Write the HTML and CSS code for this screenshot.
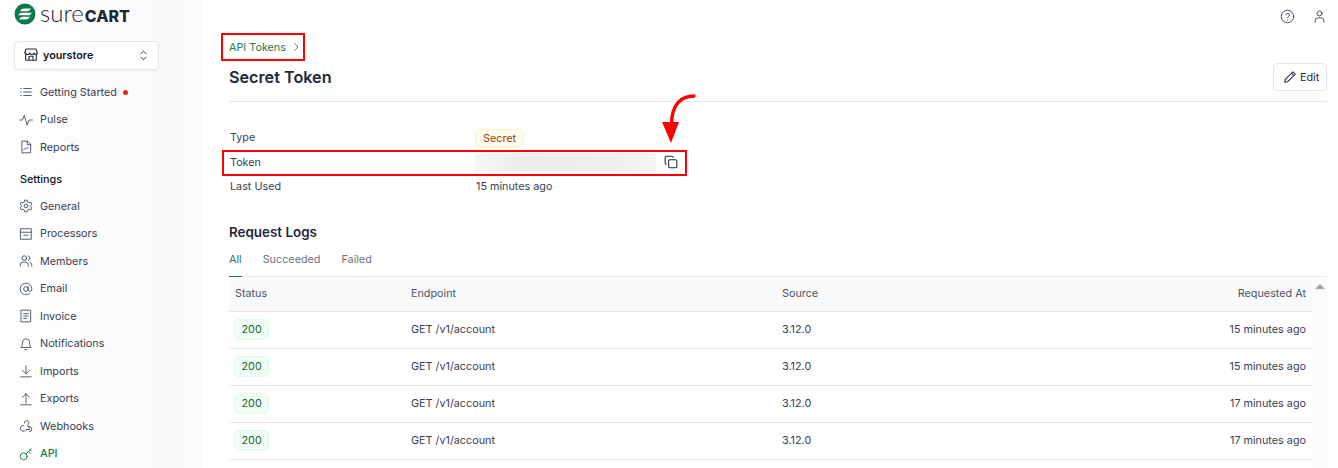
FILE: index.html
```html
<!DOCTYPE html>
<html lang="en">
<head>
    <meta charset="UTF-8">
    <meta name="viewport" content="width=device-width, initial-scale=1.0">
    <title>Secret Token</title>
    <link rel="stylesheet" href="styles.css">
</head>
<body>
  <div class="container">
    <aside class="sidebar">
      <div class="logo">
        <svg class="logo-mark" width="22" height="22" viewBox="0 0 22 22">
          <circle cx="11" cy="11" r="10.5" fill="#0b7a4b"/>
          <path d="M6 8.200c1-2 2.600-2.700 4.500-2.700h6.300c-.6 1.500-1.800 2.700-3.600 2.700z" fill="#fff"/>
          <path d="M4.200 12.300c.7-1.600 1.900-2.600 3.800-2.600h9.800c-.7 1.700-2 2.600-3.800 2.600z" fill="#fff"/>
          <path d="M5.200 16.500c.6-1.500 1.800-2.700 3.600-2.700h7.200c-1 2-2.600 2.700-4.500 2.700z" fill="#fff"/>
        </svg>
        <span class="logo-text"><span class="logo-light">sure</span><b>CART</b></span>
      </div>
      <div class="store">
        <svg class="icon" width="16" height="16" viewBox="0 0 24 24"><path d="M4 10v10h16V10M2.500 9l2-6h15l2 6c0 3-4 3-4.800 0-.8 3-5.600 3-6.700 0-1 3-5.900 3-6.700 0zM9 20v-6h6v6"/></svg>
        <span class="store-name">yourstore</span>
        <svg class="icon updown" width="13" height="13" viewBox="0 0 24 24"><path d="M7 9l5-5 5 5M7 15l5 5 5-5"/></svg>
      </div>
      <nav class="nav">
        <a class="nav-item"><svg class="icon" width="14" height="14" viewBox="0 0 24 24"><path d="M8 6h13M8 12h13M8 18h13M3 6h1M3 12h1M3 18h1"/></svg>Getting Started<span class="dot"></span></a>
        <a class="nav-item"><svg class="icon" width="14" height="14" viewBox="0 0 24 24"><path d="M1 12h5l3-8 5 17 3-9h6"/></svg>Pulse</a>
        <a class="nav-item"><svg class="icon" width="14" height="14" viewBox="0 0 24 24"><path d="M14 2H5v20h15V8zM14 2v6h6M8 17l3-3 2 1 3-3"/></svg>Reports</a>
        <div class="nav-title">Settings</div>
        <a class="nav-item"><svg class="icon" width="14" height="14" viewBox="0 0 24 24"><circle cx="12" cy="12" r="3"/><path d="M10 2h4l.6 3 2.600 1.500 2.900-1 2 3.500-2.300 2v2l2.300 2-2 3.500-2.900-1-2.600 1.500-.6 3h-4l-.6-3-2.600-1.500-2.900 1-2-3.500 2.300-2v-2l-2.300-2 2-3.500 2.900 1L9.400 5z"/></svg>General</a>
        <a class="nav-item"><svg class="icon" width="14" height="14" viewBox="0 0 24 24"><path d="M3 3h18v18H3zM3 9h18M8 14h8"/></svg>Processors</a>
        <a class="nav-item"><svg class="icon" width="14" height="14" viewBox="0 0 24 24"><circle cx="9" cy="7" r="4"/><path d="M2 21v-2a5 5 0 0 1 5-5h4a5 5 0 0 1 5 5v2M16 3.200a4 4 0 0 1 0 7.600M22 21v-2a5 5 0 0 0-3.500-4.800"/></svg>Members</a>
        <a class="nav-item"><svg class="icon" width="14" height="14" viewBox="0 0 24 24"><circle cx="12" cy="12" r="4"/><path d="M16 8v5a3 3 0 0 0 6 0v-1a10 10 0 1 0-4 8"/></svg>Email</a>
        <a class="nav-item"><svg class="icon" width="14" height="14" viewBox="0 0 24 24"><path d="M4 2h16v20H4zM8 8h8M8 12h8M8 16h5"/></svg>Invoice</a>
        <a class="nav-item"><svg class="icon" width="14" height="14" viewBox="0 0 24 24"><path d="M6 9a6 6 0 0 1 12 0c0 6 2 9 3 9H3c1 0 3-3 3-9zM10.500 21.500h3"/></svg>Notifications</a>
        <a class="nav-item"><svg class="icon" width="14" height="14" viewBox="0 0 24 24"><path d="M12 3v14M6 11l6 6 6-6M3 22h18"/></svg>Imports</a>
        <a class="nav-item"><svg class="icon" width="14" height="14" viewBox="0 0 24 24"><path d="M12 19V3M6 9l6-6 6 6M3 22h18"/></svg>Exports</a>
        <a class="nav-item"><svg class="icon" width="14" height="14" viewBox="0 0 24 24"><path d="M9 7a4 4 0 1 1 5.500 3.500L18 16M7.500 11a5 5 0 1 0 4.500 7h6M17 13a4.500 4.500 0 1 1 1 9"/></svg>Webhooks</a>
        <a class="nav-item active"><svg class="icon" width="14" height="14" viewBox="0 0 24 24"><circle cx="8" cy="16" r="6"/><path d="M12.500 11.500L21 3M16 8l3 3M19 5l2 2"/></svg>API</a>
      </nav>
    </aside>

    <main class="main">
      <div class="topbar">
        <svg class="icon" width="15" height="15" viewBox="0 0 24 24"><circle cx="12" cy="12" r="10"/><path d="M9.200 9a3 3 0 0 1 5.800 1c0 2-3 2.500-3 4M12 17.500h.01"/></svg>
        <svg class="icon" width="15" height="15" viewBox="0 0 24 24"><circle cx="12" cy="7" r="4"/><path d="M5 21v-2a5 5 0 0 1 5-5h4a5 5 0 0 1 5 5v2"/></svg>
      </div>
      <div class="crumb">API Tokens<svg class="icon" width="12" height="12" viewBox="0 0 24 24"><path d="M9 5l7 7-7 7"/></svg></div>
      <div class="page-head">
        <h1>Secret Token</h1>
        <button class="edit-btn"><svg class="icon dark" width="14" height="14" viewBox="0 0 24 24"><path d="M17 3l4 4L8 20l-5 1 1-5zM14.500 5.500l4 4"/></svg>Edit</button>
      </div>
      <dl class="details">
        <dt>Type</dt>
        <dd class="badge-cell"><span class="badge badge-warn">Secret</span></dd>
        <dt>Token</dt>
        <dd class="token-cell">
          <span class="token-blur"></span>
          <svg class="icon dark copy-icon" width="14" height="14" viewBox="0 0 24 24"><rect x="8" y="8" width="14" height="14" rx="2"/><path d="M4 16c-1 0-2-1-2-2V4c0-1 1-2 2-2h10c1 0 2 1 2 2"/></svg>
        </dd>
        <dt>Last Used</dt>
        <dd>15 minutes ago</dd>
      </dl>
      <h2>Request Logs</h2>
      <div class="tabs">
        <span class="tab active">All</span>
        <span class="tab">Succeeded</span>
        <span class="tab">Failed</span>
      </div>
      <div class="table-wrap">
        <table class="logs">
          <thead>
            <tr><th>Status</th><th>Endpoint</th><th>Source</th><th class="right">Requested At</th></tr>
          </thead>
          <tbody>
            <tr><td><span class="badge badge-ok">200</span></td><td>GET /v1/account</td><td>3.12.0</td><td class="right">15 minutes ago</td></tr>
            <tr><td><span class="badge badge-ok">200</span></td><td>GET /v1/account</td><td>3.12.0</td><td class="right">15 minutes ago</td></tr>
            <tr><td><span class="badge badge-ok">200</span></td><td>GET /v1/account</td><td>3.12.0</td><td class="right">17 minutes ago</td></tr>
            <tr><td><span class="badge badge-ok">200</span></td><td>GET /v1/account</td><td>3.12.0</td><td class="right">17 minutes ago</td></tr>
          </tbody>
        </table>
        <div class="scrollbar"><span class="scroll-up"></span></div>
      </div>
    </main>
  </div>

  <!-- annotations drawn over the screenshot -->
  <div class="mark mark-crumb"></div>
  <div class="mark mark-token"></div>
  <svg class="arrow" width="40" height="52" viewBox="0 0 40 52">
    <path d="M36 4C24 4 14 11 13.500 32" fill="none" stroke="#f00" stroke-width="3.500" stroke-linecap="round"/>
    <path d="M4 30h17l-8 21z" fill="#f00"/>
  </svg>
</body>
</html>
```
FILE: styles.css
```css
* {
    box-sizing: border-box;
}

html, body {
    margin: 0;
    height: 100%;
    overflow: hidden;
}

body {
    font-family: Inter, "Liberation Sans", sans-serif;
    font-size: 10.800px;
    color: #374151;
    background: #fff;
}

.container {
    display: flex;
    height: 468px;
}

.icon {
    flex: none;
    fill: none;
    stroke: #4b5563;
    stroke-width: 1.600;
    stroke-linecap: round;
    stroke-linejoin: round;
}

.icon.dark {
    stroke: #1f2937;
    stroke-width: 1.800;
}

/* sidebar */
.sidebar {
    width: 202px;
    flex: none;
    padding: 3px 0 0 14px;
    background: linear-gradient(to right, #fff, #f8f9fb 186px, #fafbfc 186px, #fafbfc);
}

.logo {
    display: flex;
    align-items: center;
    gap: 4px;
    height: 22px;
}

.logo-text {
    font-family: Lato, sans-serif;
    font-size: 24px;
    line-height: 22px;
    color: #1f2933;
}

.logo-light {
    font-weight: 300;
    margin-right: 1px;
}

.logo-text b {
    font-family: Inter, sans-serif;
    font-weight: 800;
    font-size: 16px;
}

.store {
    display: flex;
    align-items: center;
    width: 145px;
    height: 29px;
    margin-top: 16px;
    padding: 0 8px 1px 8px;
    background: #fff;
    border: 1px solid #e5e7eb;
    border-radius: 4px;
    box-shadow: 0 1px 2px rgba(0, 0, 0, .05);
}

.store .icon {
    stroke: #1f2937;
}

.store-name {
    flex: 1;
    margin-left: 4px;
    font-weight: 600;
    color: #111827;
}

.nav {
    display: flex;
    flex-direction: column;
    margin-top: 8.500px;
    padding-left: 5px;
}

.nav-item {
    display: flex;
    align-items: center;
    gap: 7px;
    height: 27.500px;
}

.nav-item .dot {
    width: 5px;
    height: 5px;
    margin-left: -1px;
    border-radius: 50%;
    background: #dc2626;
}

.nav-item.active {
    color: #15803d;
    font-weight: 500;
}

.nav-item.active .icon {
    stroke: #15803d;
}

.nav-title {
    margin: 11.500px 0 6px 1px;
    height: 14px;
    line-height: 14px;
    font-weight: 500;
    color: #111827;
}

/* main column */
.main {
    flex: 1;
    min-width: 0;
    padding: 0 11px 0 27px;
}

.topbar {
    display: flex;
    justify-content: flex-end;
    gap: 17px;
    height: 32px;
    padding: 9px 0 0;
}

.crumb {
    display: flex;
    align-items: center;
    gap: 4px;
    height: 30px;
    color: #1f7a4d;
}

.page-head {
    display: flex;
    align-items: center;
    justify-content: space-between;
    height: 40px;
    padding-bottom: 9px;
    border-bottom: 1px solid #e5e7eb;
}

h1 {
    margin: 0;
    font-size: 16.200px;
    font-weight: 600;
    color: #1e293b;
}

.edit-btn {
    display: flex;
    align-items: center;
    gap: 3px;
    width: 54px;
    height: 28px;
    padding: 0 0 0 9px;
    font: inherit;
    color: #1f2937;
    background: #fff;
    border: 1px solid #e5e7eb;
    border-radius: 4px;
}

.details {
    display: grid;
    grid-template-columns: 247px 1fr;
    grid-template-rows: 25px 25px 23.500px;
    align-items: center;
    margin: 23px 0 0;
}

.details dt {
    padding-left: 1px;
}

.details dd {
    margin: 0;
}

.details .badge-cell {
    margin-top: 1px;
}

.token-cell {
    display: flex;
    align-items: center;
    gap: 8px;
    margin-left: -2px !important;
}

.copy-icon {
    margin-bottom: 2px;
}

.token-blur {
    width: 182px;
    height: 19px;
    background: linear-gradient(to right, #f6f7f7, #eceded 25%, #eeefef 75%, #f5f5f5);
}

.badge {
    display: inline-block;
    border-radius: 5px;
    border: 1px solid;
}

.badge-warn {
    padding: 2px 7px;
    margin-left: -1px;
    color: #92400e;
    background: #fffbeb;
    border-color: #fef3c7;
}

.badge-ok {
    padding: 3px 6.500px;
    color: #166534;
    background: #f0fdf4;
    border-color: #dcfce7;
}

h2 {
    margin: 25px 0 0;
    font-size: 13.400px;
    line-height: 16px;
    font-weight: 600;
    color: #1e293b;
}

.tabs {
    display: flex;
    gap: 21px;
    height: 25px;
    margin-top: 12px;
    border-bottom: 1px solid #e5e7eb;
}

.tab {
    height: 25px;
    line-height: 16px;
    color: #6b7280;
}

.tab.active {
    color: #1f7a4d;
    border-bottom: 1px solid #1f7a4d;
}

.table-wrap {
    display: flex;
    height: 200px;
}

.logs {
    flex: 1;
    border-collapse: collapse;
    table-layout: fixed;
    align-self: flex-start;
}

.logs th {
    height: 35px;
    padding: 0 6px;
    text-align: left;
    font-weight: 400;
    color: #4b5563;
    background: #f9fafb;
    border-bottom: 1px solid #e5e7eb;
}

.logs td {
    height: 37px;
    padding: 0 6px 1px;
    color: #374151;
    border-bottom: 1px solid #e5e7eb;
}

.logs td:first-child {
    padding-left: 5px;
}

.logs th:nth-child(1), .logs td:nth-child(1) { width: 176px; }
.logs th:nth-child(2), .logs td:nth-child(2) { width: 371px; }
.logs th:nth-child(3), .logs td:nth-child(3) { width: 240px; }

.logs .right {
    text-align: right;
}

.scrollbar {
    width: 15px;
    flex: none;
    padding-top: 7px;
    display: flex;
    justify-content: center;
    align-items: flex-start;
    background: #fafbfb;
}

.scroll-up {
    width: 0;
    height: 0;
    border-left: 5px solid transparent;
    border-right: 5px solid transparent;
    border-bottom: 5px solid #a3a3a3;
}

/* red annotations */
.mark {
    position: absolute;
    border: 2px solid #f00;
}

.mark-crumb {
    left: 221px;
    top: 33px;
    width: 84px;
    height: 28px;
}

.mark-token {
    left: 222px;
    top: 150px;
    width: 465px;
    height: 26px;
}

.arrow {
    position: absolute;
    left: 658px;
    top: 92px;
}
```
